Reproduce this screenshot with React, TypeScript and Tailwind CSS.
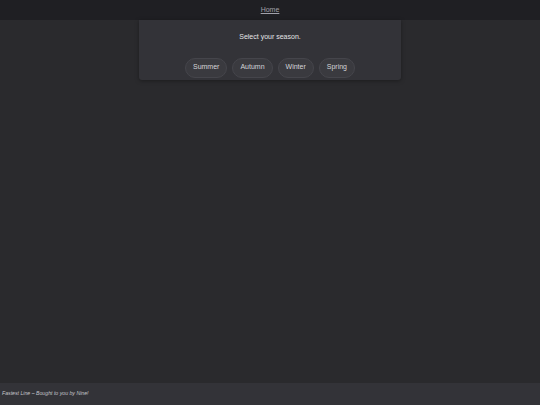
const SEASONS = ['Summer', 'Autumn', 'Winter', 'Spring']

export default function App() {
  return (
    <div
      className="flex h-[405px] w-[540px] flex-col bg-[#2a2a2d] text-[#d4d4d8]"
      style={{ fontFamily: '"Liberation Sans", Arial, sans-serif' }}
    >
      {/* top nav */}
      <header className="flex h-[20px] shrink-0 items-center justify-center bg-[#1f1f23]">
        <a className="text-[7px] text-[#a1a1aa] underline">Home</a>
      </header>

      <main className="flex flex-1 justify-center">
        <div className="flex h-[60px] w-[262px] flex-col items-center rounded-b-[3px] bg-[#333338] shadow-[0_1px_4px_rgba(0,0,0,0.35)]">
          <p className="mt-[12px] text-[7px] text-[#e4e4e7]">Select your season.</p>
          <div className="mt-[15px] flex gap-[5px]">
            {SEASONS.map((s) => (
              <button
                key={s}
                className="h-[20px] rounded-full border border-[#45454b] bg-[#3a3a3f] px-[7px] text-[7px] text-[#d4d4d8]"
              >
                {s}
              </button>
            ))}
          </div>
        </div>
      </main>

      <footer className="flex h-[22px] shrink-0 items-center bg-[#333338] px-[2px]">
        <span className="text-[5.2px] italic text-[#c4c4c8]">Fastest Line – Bought to you by Nine!</span>
      </footer>
    </div>
  )
}
